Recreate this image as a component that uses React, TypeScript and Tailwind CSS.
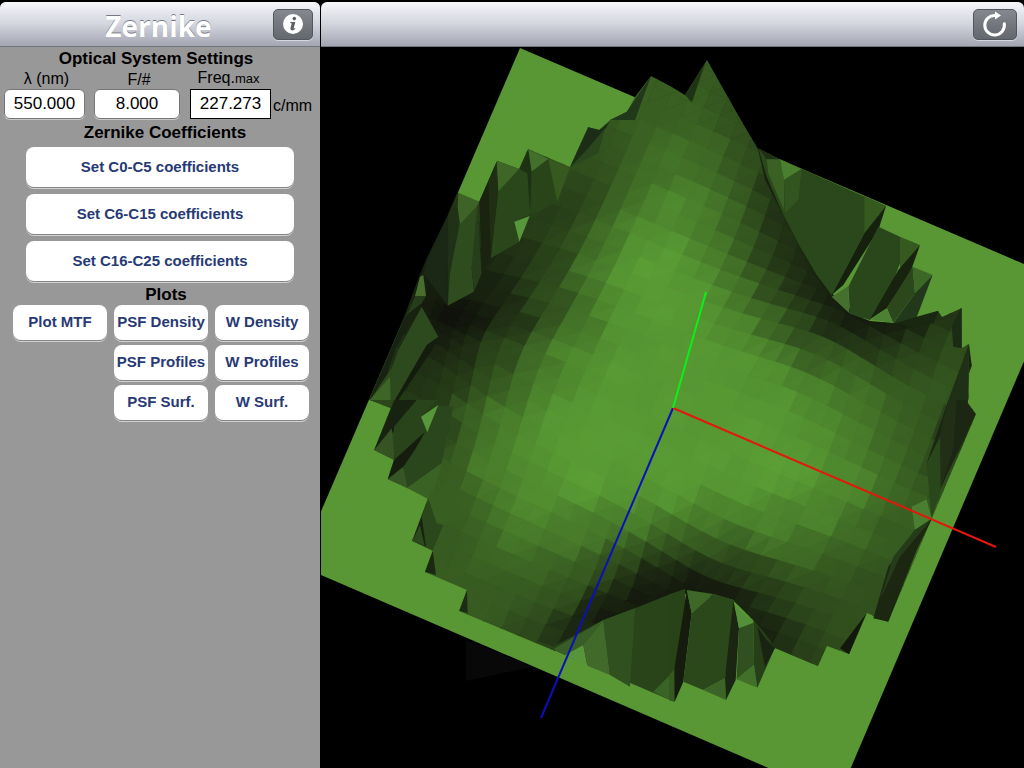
import React from "react";

type Sample = [number, number, number];
type Face = [string, string];

/* Light samples over the wavefront surface: x, y, intensity. */
const light: Sample[] = [
  [707, 62, 0.47], [735, 115, 0.42], [757, 150, 0.35], [770, 198, 0.22], [783, 222, 0.18], [800, 252, 0.16], [815, 280, 0.14],
  [831, 301, 0.1], [850, 316, 0.08], [870, 325, 0.07], [893, 327, 0.08], [915, 324, 0.1], [939, 315, 0.18],
  [740, 157, 0.43], [710, 157, 0.58], [670, 157, 0.66], [685, 115, 0.52], [703, 207, 0.76], [730, 207, 0.58], [752, 207, 0.38],
  [670, 207, 0.85], [670, 257, 0.97], [703, 290, 0.94], [720, 257, 0.75], [742, 250, 0.5], [763, 250, 0.32], [780, 255, 0.22],
  [737, 290, 0.66], [770, 290, 0.38], [803, 290, 0.18], [770, 323, 0.58], [800, 320, 0.36], [830, 325, 0.18], [737, 323, 0.82],
  [770, 373, 0.88], [820, 357, 0.5], [820, 390, 0.78], [853, 373, 0.56], [870, 345, 0.24], [903, 345, 0.26], [903, 362, 0.38],
  [903, 395, 0.5], [930, 340, 0.32], [953, 350, 0.4], [943, 390, 0.45], [958, 325, 0.33], [860, 400, 0.68], [770, 467, 1],
  [820, 433, 0.88], [853, 433, 0.74], [887, 433, 0.58], [920, 433, 0.47], [955, 433, 0.24], [937, 477, 0.36], [853, 483, 0.84],
  [887, 483, 0.62], [910, 483, 0.5], [820, 517, 0.8], [853, 533, 0.6], [887, 533, 0.48], [870, 583, 0.4], [837, 567, 0.46],
  [803, 550, 0.6], [770, 527, 0.78], [720, 517, 0.78], [670, 500, 0.93], [670, 530, 0.62], [670, 550, 0.38], [670, 573, 0.16],
  [670, 590, 0.07], [720, 543, 0.5], [720, 567, 0.26], [713, 588, 0.08], [735, 597, 0.08], [753, 573, 0.36], [747, 600, 0.15],
  [777, 607, 0.28], [787, 640, 0.2], [810, 640, 0.32], [810, 600, 0.38], [765, 628, 0.1], [837, 627, 0.4], [690, 585, 0.07],
  [587, 483, 1], [537, 500, 0.87], [553, 417, 0.95], [487, 467, 0.75], [453, 467, 0.48], [470, 417, 0.53], [503, 417, 0.75],
  [453, 543, 0.47], [487, 550, 0.55], [453, 500, 0.5], [520, 533, 0.72], [503, 600, 0.47], [470, 600, 0.48], [537, 567, 0.55],
  [570, 535, 0.72], [553, 600, 0.43], [587, 573, 0.48], [603, 533, 0.7], [637, 517, 0.77], [620, 560, 0.4], [620, 587, 0.17],
  [603, 610, 0.08], [570, 632, 0.14], [653, 580, 0.12], [527, 633, 0.36], [640, 597, 0.07], [637, 140, 0.52], [660, 113, 0.5],
  [612, 140, 0.42], [653, 173, 0.61], [603, 173, 0.4], [620, 190, 0.54], [653, 207, 0.75], [587, 190, 0.33], [570, 207, 0.3],
  [553, 223, 0.25], [603, 240, 0.62], [637, 240, 0.9], [570, 240, 0.4], [587, 273, 0.68], [553, 257, 0.3], [520, 257, 0.2],
  [487, 280, 0.12], [620, 273, 0.93], [647, 273, 1], [553, 280, 0.36], [503, 297, 0.14], [453, 317, 0.02], [477, 317, 0.07],
  [520, 323, 0.22], [553, 307, 0.4], [580, 323, 0.66], [620, 323, 0.92], [463, 357, 0.18], [443, 340, 0.1], [503, 357, 0.36],
  [487, 383, 0.38], [537, 357, 0.6], [570, 357, 0.85], [537, 390, 0.78], [513, 390, 0.57], [453, 383, 0.26], [430, 400, 0.24],
  [620, 373, 0.96], [673, 408, 0.96], [700, 350, 0.95], [720, 400, 0.95], [650, 460, 0.97], [710, 460, 0.97], [660, 310, 0.97],
  [740, 360, 0.93], [690, 310, 0.95], [780, 410, 0.94], [750, 430, 0.97], [600, 410, 0.96], [620, 440, 0.97], [590, 440, 0.98],
  [680, 480, 0.97], [740, 490, 0.94], [630, 490, 0.95], [560, 450, 0.96], [800, 470, 0.97], [530, 450, 0.87], [670, 360, 0.95],
  [440, 430, 0.3], [425, 370, 0.2], [440, 290, 0.1],
];

/* Hollows that pull the mesh lines together: x, y, strength. */
const hollows: Sample[] = [
  [440, 318, 0.55],
  [845, 292, 0.4],
  [690, 620, 0.4],
];

function intensityAt(x: number, y: number) {
  let sum = 0;
  let weight = 0;
  for (const [sx, sy, value] of light) {
    const d = (x - sx) ** 2 + (y - sy) ** 2 + 160;
    const w = 1 / (d * d);
    sum += w * value;
    weight += w;
  }
  return sum / weight;
}

function shade(t: number) {
  const k = Math.max(0.05, Math.min(1, t)) ** 0.78;
  return `rgb(${Math.round(8 + 83 * k)},${Math.round(3 + 156 * k)},${Math.round(7 + 46 * k)})`;
}

function node(i: number, j: number): [number, number] {
  const step = 18;
  const x0 = 673 + i * step * 0.919 - j * step * 0.394;
  const y0 = 408 + i * step * 0.394 + j * step * 0.919;
  let x = x0;
  let y = y0;
  for (const [hx, hy, strength] of hollows) {
    const pull = strength * Math.exp(-((x0 - hx) ** 2 + (y0 - hy) ** 2) / 9000);
    x += (hx - x0) * pull;
    y += (hy - y0) * pull;
  }
  return [x, y];
}

function buildMesh(): Face[] {
  const faces: Face[] = [];
  for (let i = -24; i < 24; i++) {
    for (let j = -24; j < 24; j++) {
      const a = node(i, j);
      const b = node(i + 1, j);
      const c = node(i + 1, j + 1);
      const d = node(i, j + 1);
      if (a[0] < 340 || a[0] > 1010 || a[1] < 30 || a[1] > 730) continue;
      const quad = intensityAt((a[0] + c[0]) / 2, (a[1] + c[1]) / 2);
      [[a, b, d], [b, c, d]].forEach((tri) => {
        const cx = (tri[0][0] + tri[1][0] + tri[2][0]) / 3;
        const cy = (tri[0][1] + tri[1][1] + tri[2][1]) / 3;
        const t = quad * 0.6 + intensityAt(cx, cy) * 0.4;
        faces.push([tri.map((p) => `${p[0].toFixed(1)},${p[1].toFixed(1)}`).join(" "), shade(t)]);
      });
    }
  }
  return faces;
}

const mesh = buildMesh();

const body =
  "707,60 725,92 742,122 758,149 765,180 783,215 800,247 815,275 831,298 850,313 870,321 893,323 915,320 938,311 942,317 962,308 962,348 969,344 969,360 972,365 969,373 968,403 976,414 888,622 867,613 849,654 827,646 818,666 775,648 763,633 753,620 733,600 713,594 687,590 670,594 603,620 555,651 459,611 467,590 425,572 433,551 412,541 428,498 388,479 394,460 374,450 391,408 370,400 397,337 407,315 420,277 428,258 448,217 458,193 479,202 497,161 519,169 528,149 570,167 588,127 599,130 610,120 627,112 635,97 651,76 670,86 685,95";

/* Walls of the pupil edge, one group per quarter of the view, at three units per pixel. */
const walls: { origin: string; faces: Face[] }[] = [
  {
    origin: "translate(320 40) scale(.33333)",
    faces: [
      ["325,655 385,530 383,797 310,700", "#1a2815"],
      ["385,530 413,470 416,555 383,797", "#1f3116"],
      ["415,458 478,485 470,500 420,555 413,500", "#3d6426"],
      ["418,555 472,498 478,600 455,680 462,755 383,797 390,700", "#2e4c1d"],
      ["472,498 478,600 485,700 462,755 455,680", "#263e19"],
      ["478,485 530,365 535,455 512,655 487,700", "#19230f"],
      ["505,430 530,365 535,455 512,640", "#202f14"],
      ["530,362 598,387 535,455", "#3d6627"],
      ["535,455 598,387 630,395 635,520 583,545 598,605 512,655", "#2a471b"],
      ["598,387 625,328 635,395 630,515 622,400", "#1d3113"],
      ["625,328 685,357 635,395", "#42702a"],
      ["635,395 685,357 712,485 635,525", "#294419"],
      ["685,357 750,382 712,485", "#37591f"],
      ["583,545 629,528 598,605", "#57963a"],
      ["300,710 310,705 318,768 285,768", "#476e2c"],
      ["285,768 318,768 305,790 262,825", "#253d18"],
      ["260,825 305,790 225,930 200,1005 150,1080 230,890", "#172210"],
      ["305,800 355,890 320,930 235,1080 150,1080 215,985 235,930", "#2c4a1d"],
      ["355,890 340,925 235,1080 225,1080 320,915", "#141d0d"],
      ["150,1080 210,1010 212,1080", "#3d6626"],
      ["993,108 945,240 870,240 920,215", "#21391a"],
      ["805,262 838,270 870,245 820,320 750,382", "#1b2d17"],
      ["855,265 835,340 750,382 800,330", "#2a461d"],
    ],
  },
  {
    origin: "translate(320 400) scale(.33333)",
    faces: [
      ["150,0 220,0 213,25", "#2b471b"],
      ["213,25 225,0 295,0 225,90 163,150", "#182211"],
      ["163,150 215,85 224,180", "#365423"],
      ["222,80 290,0 355,0 303,50 322,95 222,180", "#29431b"],
      ["315,95 255,205 203,238 222,180", "#151e0e"],
      ["203,238 250,200 262,263", "#365725"],
      ["250,200 322,95 350,15 400,20 365,190 262,263", "#2a461c"],
      ["262,263 365,190 345,260 325,298", "#3b6225"],
      ["303,50 355,15 322,97", "#57963a"],
      ["325,295 350,370 370,375 338,452 318,440 300,360", "#2b481d"],
      ["325,295 305,350 318,440 277,422", "#1a2110"],
      ["277,422 300,375 314,437", "#2c4a1e"],
      ["338,452 348,525 315,515", "#1d2812"],
      ["441,570 443,640 418,632", "#1d2c14"],
      ["690,745 850,660 945,625 1050,583 1050,900 735,765", "#294419"],
      ["700,748 850,660 790,735 735,765", "#385d26"],
      ["790,735 802,797 735,765", "#57943a"],
      ["850,660 870,825 802,797 790,735", "#40692a"],
      ["850,660 945,625 930,860 870,825", "#305020"],
      ["1000,875 1050,825 1050,900", "#3a6327"],
    ],
  },
  {
    origin: "translate(670 400) scale(.33333)",
    faces: [
      ["-3,583 45,567 45,700 14,905 -3,900", "#284318"],
      ["-3,825 12,810 14,905 -3,900", "#36591f"],
      ["50,567 65,640 40,845 14,905 14,800 40,640", "#151c0e"],
      ["50,570 130,582 65,640", "#3f6728"],
      ["65,640 130,582 190,600 195,660 165,835 100,870 40,845", "#2b481b"],
      ["100,870 165,835 168,900", "#3d6427"],
      ["190,600 207,685 197,840 168,900 165,835", "#1a2611"],
      ["195,618 250,665 207,685", "#54903a"],
      ["207,685 250,668 252,795 200,838", "#30511f"],
      ["200,838 252,795 262,863", "#42702a"],
      ["250,660 285,700 315,743 262,863 252,795", "#263f19"],
      ["262,680 290,720 315,743 285,800", "#182411"],
      ["835,0 893,0 893,10 917,43 800,290 770,190", "#1b2712"],
      ["835,0 860,0 850,150 810,270 808,110", "#202f15"],
      ["770,190 810,110 812,270 785,355", "#2a461b"],
      ["725,320 770,298 785,355 735,390", "#4a7e31"],
      ["735,390 785,358 740,450 655,665 610,655 655,500", "#1b2711"],
      ["735,390 785,358 690,470 630,600 670,470", "#253b1a"],
      ["588,642 537,763 510,745", "#12190c"],
    ],
  },
  {
    origin: "translate(670 40) scale(.33333)",
    faces: [
      ["265,325 330,358 648,498 583,580 485,765 440,705 390,620 340,525 290,410", "#2b481c"],
      ["265,325 330,358 290,358", "#1f3016"],
      ["290,358 330,358 342,420 342,510 295,400", "#3a6024"],
      ["330,358 395,387 342,420", "#4a7f30"],
      ["342,420 395,387 385,480 345,520", "#32541f"],
      ["583,468 648,498 583,580", "#36591f"],
      ["648,498 625,570 520,735 485,765 583,580", "#15200e"],
      ["625,560 690,590 690,670 640,800 600,840 540,822 535,740", "#2a461b"],
      ["690,590 750,615 690,690", "#36591f"],
      ["750,615 720,700 650,805 600,838 685,690", "#17220f"],
      ["728,680 735,760 670,848 650,805", "#2b471b"],
      ["728,680 788,705 735,760", "#3d6727"],
      ["788,705 740,832 670,850 735,760", "#22381a"],
      ["485,770 535,738 538,820", "#456f2d"],
      ["600,838 652,805 668,848", "#4c8134"],
      ["105,70 66,187 45,165", "#1f3315"],
      ["670,850 740,830 805,812 790,850 730,862", "#192610"],
      ["873,803 875,925 850,920 845,860", "#1c2b13"],
      ["897,912 895,1080 835,1080", "#1e3015"],
      ["897,912 905,975 897,1000", "#18240f"],
    ],
  },
];

function SurfaceView() {
  return (
    <svg
      viewBox="321 47 703 721"
      preserveAspectRatio="xMinYMin slice"
      className="block w-full grow bg-black"
      role="img"
      aria-label="Wavefront surface"
    >
      <defs>
        <clipPath id="body">
          <polygon points={body} />
        </clipPath>
      </defs>
      <polygon points="466,640 533,667 508,672 466,681" fill="#070807" />
      <polygon points="520,48 1059,279 838,798 298,565" fill="#599734" />
      <g fill="none" stroke="#18220f" strokeWidth="5">
        <path d="M759 150 766 180 784 215 801 247 816 275 832 297 850 312" />
        <path d="M565 648 603 621 670 595 687 591 713 595" />
      </g>
      <path d="M458 193 448 217 428 258 420 277 407 312 397 337 370 400" fill="none" stroke="#1a2711" strokeWidth="2" />
      <g clipPath="url(#body)">
        {mesh.map(([points, fill], n) => (
          <polygon key={n} points={points} fill={fill} stroke={fill} strokeWidth="0.8" />
        ))}
      </g>
      {walls.map((wall) => (
        <g key={wall.origin} transform={wall.origin}>
          {wall.faces.map(([points, fill], n) => (
            <polygon key={n} points={points} fill={fill} />
          ))}
        </g>
      ))}
      <g strokeWidth="2" fill="none">
        <path d="M673 408 541 718" stroke="#0c10b8" />
        <path d="M673 408 996 547" stroke="#e3170b" />
        <path d="M673 408 706 292" stroke="#0cf01a" />
      </g>
    </svg>
  );
}

const barClass =
  "flex h-[45px] shrink-0 items-center rounded-t-md border-b border-[#73767f] bg-linear-to-b from-[#f6f7fa] via-[#d3d5de] to-[#a3a5b2]";
const barButton =
  "flex h-[31px] items-center justify-center rounded-[5px] border border-[#53565c] bg-linear-to-b from-[#85888e] to-[#63676e] shadow-[0_1px_0_#d5d7de]";
const heading = "text-center text-[17px] leading-5 font-bold text-black";
const actionButton =
  "rounded-lg bg-white text-center text-[15px] font-bold whitespace-nowrap text-[#273a75] shadow-[0_1px_0_#858585,0_2px_0_#d2d2d2]";
const field = "block h-[30px] w-full bg-white text-center text-[17px] text-black";
const roundField = "rounded-md border border-[#777] shadow-[0_1px_0_#c8c8c8]";

function PlotButton({ children }: { children: React.ReactNode }) {
  return <button className={`${actionButton} h-[35px] w-[94px]`}>{children}</button>;
}

export default function App() {
  return (
    <div className="flex min-h-screen bg-black pt-0.5 font-['Liberation_Sans',Arial,sans-serif]">
      <aside className="flex w-80 shrink-0 flex-col rounded-t-md bg-[#999899]">
        <header className={`${barClass} justify-between pr-[7px]`}>
          <h1 className="grow pt-1 pl-11 text-center font-['Open_Sans',sans-serif] text-[28px] leading-8 font-bold text-white [text-shadow:0_-1px_0_#777a83]">
            Zernike
          </h1>
          <button aria-label="Info" className={`${barButton} w-10`}>
            <svg viewBox="0 0 22 22" className="size-[22px]">
              <circle cx="11" cy="11" r="10" fill="#fff" />
              <circle cx="12.3" cy="5.6" r="1.8" fill="#5e6268" />
              <path d="M8.3 9h5l-1.6 6.2c-.1.6.3.6 1.3-.3l.5.6c-1 1.4-2.2 2-3.4 1.9-1.5-.1-1.9-1-1.6-2.3l1.1-4.3c.1-.6 0-.8-1.5-.9z" fill="#5e6268" />
            </svg>
          </button>
        </header>

        <section className="px-1 pt-0.5">
          <h2 className={`${heading} pr-2`}>Optical System Settings</h2>
          <div className="flex items-end text-base leading-[18px] text-black">
            <div className="w-[81px]">
              <label htmlFor="wavelength" className="block pb-px pl-1 text-center">λ (nm)</label>
              <input id="wavelength" defaultValue="550.000" className={`${field} ${roundField}`} />
            </div>
            <div className="ml-[9px] w-[86px]">
              <label htmlFor="fnumber" className="block pl-1 text-center">F/#</label>
              <input id="fnumber" defaultValue="8.000" className={`${field} ${roundField}`} />
            </div>
            <div className="ml-[10px] w-[81px]">
              <label htmlFor="freq" className="block pr-1 pb-px text-center">
                Freq.<span className="text-[13px]">max</span>
              </label>
              <input id="freq" readOnly defaultValue="227.273" className={`${field} border border-black`} />
            </div>
            <span className="pb-1 pl-0.5">c/mm</span>
          </div>
        </section>

        <section className="pt-1">
          <h2 className={`${heading} pl-2.5`}>Zernike Coefficients</h2>
          <div className="flex flex-col gap-[7px] px-[26px] pt-1">
            <button className={`${actionButton} h-10`}>Set C0-C5 coefficients</button>
            <button className={`${actionButton} h-10`}>Set C6-C15 coefficients</button>
            <button className={`${actionButton} h-10`}>Set C16-C25 coefficients</button>
          </div>
        </section>

        <section className="pt-1">
          <h2 className={`${heading} pl-3`}>Plots</h2>
          <div className="flex items-start gap-[7px] pl-[13px]">
            <PlotButton>Plot MTF</PlotButton>
            <div className="flex flex-col gap-[5px]">
              <PlotButton>PSF Density</PlotButton>
              <PlotButton>PSF Profiles</PlotButton>
              <PlotButton>PSF Surf.</PlotButton>
            </div>
            <div className="flex flex-col gap-[5px]">
              <PlotButton>W Density</PlotButton>
              <PlotButton>W Profiles</PlotButton>
              <PlotButton>W Surf.</PlotButton>
            </div>
          </div>
        </section>
      </aside>

      <main className="ml-px flex min-w-0 grow flex-col">
        <header className={`${barClass} justify-end pr-[7px]`}>
          <button aria-label="Reset view" className={`${barButton} w-11`}>
            <svg viewBox="0 0 26 26" className="size-[26px]">
              <path d="M22.3 12.8A9.8 9.8 0 1 1 13.2 4.4" fill="none" stroke="#fff" strokeWidth="3" strokeLinecap="round" />
              <path d="M13 .5 19 4.4 13 8.6z" fill="#fff" />
            </svg>
          </button>
        </header>
        <SurfaceView />
      </main>
    </div>
  );
}
